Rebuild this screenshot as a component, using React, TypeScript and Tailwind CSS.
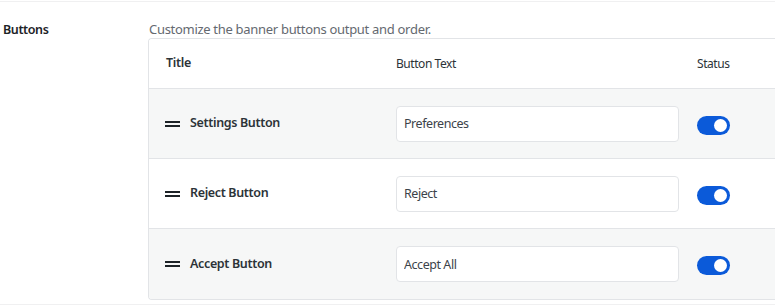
import React from "react";

const rows = [
  { title: "Settings Button", value: "Preferences", shaded: true },
  { title: "Reject Button", value: "Reject", shaded: false },
  { title: "Accept Button", value: "Accept All", shaded: true },
];

const DragHandle = () => (
  <svg width="15" height="6" viewBox="0 0 15 6" className="shrink-0">
    <rect x="0" y="0" width="15" height="2" fill="#1d2327" />
    <rect x="0" y="4" width="15" height="2" fill="#1d2327" />
  </svg>
);

const Toggle = () => (
  <div className="flex h-[19px] w-[33px] items-center justify-end rounded-full bg-[#0b5ad9] pr-[3px]">
    <div className="h-[13px] w-[13px] rounded-full bg-white" />
  </div>
);

export default function App() {
  return (
    <div
      className="w-[775px] h-[306px] overflow-hidden bg-white"
      style={{ fontFamily: '"Noto Sans", "Open Sans", sans-serif' }}
    >
      <div className="mt-[1px] flex h-[304px] border-y border-[#f0f0f1]">
        <div className="w-[148px] shrink-0 pl-[3px] pt-[19px] text-[12.5px] tracking-[-0.4px] font-semibold text-[#1d2327]">
          Buttons
        </div>
        <div className="flex flex-col">
          <p className="pl-[1px] pt-[19px] text-[13px] tracking-[-0.3px] leading-[17px] text-[#646970]">
            Customize the banner buttons output and order.
          </p>
          <div className="w-[640px] overflow-hidden rounded-l border border-r-0 border-[#e2e4e7]">
            <div className="grid h-[50px] grid-cols-[247px_301px_1fr] items-center border-b border-[#e2e4e7] bg-white text-[12px] tracking-[-0.45px] text-[#2c3338]">
              <div className="pl-[17px] text-[12.5px] tracking-[-0.3px] font-semibold">Title</div>
              <div>Button Text</div>
              <div>Status</div>
            </div>
            {rows.map((row, i) => (
              <div
                key={row.title}
                className={`grid h-[70px] grid-cols-[247px_301px_1fr] items-center ${
                  i < rows.length - 1 ? "border-b border-[#e2e4e7]" : ""
                } ${row.shaded ? "bg-[#f6f7f7]" : "bg-white"}`}
              >
                <div className="flex items-center gap-[10px] pl-[16px]">
                  <DragHandle />
                  <span className="text-[12.5px] tracking-[-0.35px] font-semibold text-[#2c3338]">{row.title}</span>
                </div>
                <div>
                  <input
                    readOnly
                    value={row.value}
                    className="h-[36px] w-[283px] rounded-[4px] border border-[#e2e4e7] bg-white px-[7px] text-[12.5px] tracking-[-0.45px] text-[#3c434a] outline-none"
                  />
                </div>
                <div className="pt-[3px]">
                  <Toggle />
                </div>
              </div>
            ))}
          </div>
        </div>
      </div>
    </div>
  );
}
